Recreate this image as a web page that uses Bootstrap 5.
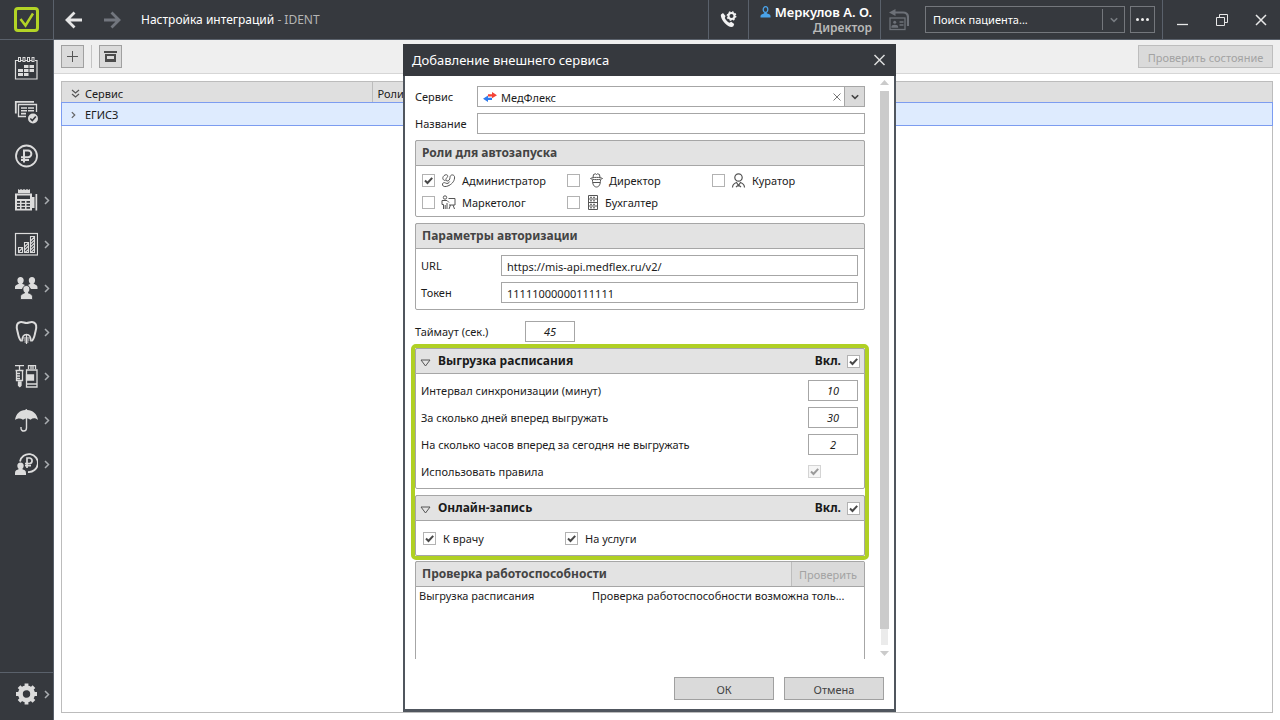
<!DOCTYPE html>
<html lang="ru">
<head>
<meta charset="utf-8">
<meta name="viewport" content="width=device-width, initial-scale=1">
<title>Настройка интеграций - IDENT</title>
<link href="https://cdn.jsdelivr.net/npm/bootstrap@5.3.0/dist/css/bootstrap.min.css" rel="stylesheet">
<style>
  :root { --dark: #36393e; --line: #5a616b; --edge: #a6a6a6; --fill: #e3e3e3; --btn: #dadada; }
  body { font-family: "Noto Sans", "Open Sans", sans-serif; font-size: 11px; line-height: 16px; color: #1c1c1c; background: #fff; }
  svg { display: block; flex: none; }
  button, a { color: inherit; }
  .bare { background: none; border: 0; padding: 0; display: flex; align-items: center; justify-content: center; }

  .sidebar { width: 54px; background: var(--dark); border-right: 1px solid var(--line); color: #dcdcdc; }
  .logo-cell { height: 40px; border-bottom: 1px solid var(--line); }
  .side-list { padding-top: 6px; }
  .side-link { height: 44px; padding-left: 14px; gap: 6px; display: flex; align-items: center; text-decoration: none; }
  .side-link svg + svg { color: #a9acb0; }
  .side-foot { border-top: 1px solid var(--line); height: 48px; }
  .side-foot .side-link { height: 42px; }

  .topbar { height: 40px; background: var(--dark); border-bottom: 1px solid var(--line); color: #fff; padding-left: 11px; }
  .topbar h1 { font-size: 12px; line-height: 18px; font-weight: 400; }
  .nav-arrow { margin-right: 20px; }
  .app-name { color: #b4b4b4; }
  .cell { border-left: 1px solid var(--line); align-self: stretch; display: flex; align-items: center; }
  .phone-cell { width: 40px; }
  .user-cell { width: 132px; padding-right: 8px; }
  .user-name { font-size: 13px; font-weight: 600; line-height: 16px; }
  .user-role { font-size: 12px; font-weight: 600; line-height: 15px; color: #b9b9b9; }
  .search { width: 200px; height: 27px; border: 1px solid #74777c; margin-right: 5px; }
  .search input { background: none; border: 0; color: #fff; width: 176px; padding: 0 7px; outline: 0; }
  .search input::placeholder { color: #fff; opacity: 1; }
  .search button { width: 22px; height: 21px; border-left: 1px solid #74777c; color: #777b80; }
  .dots { width: 25px; height: 27px; border: 1px solid #74777c; margin-right: 7px; }
  .win-cell { width: 118px; color: #e8e8e8; }
  .win-cell button { width: 39px; height: 39px; }

  .toolbar { height: 34px; padding: 5px 7px; gap: 7px; background: #efefef; border-bottom: 1px solid #d6d6d6; }
  .flat-btn { background: var(--btn); border: 1px solid #a0a0a0; border-radius: 0; color: #444; font-size: 11px; line-height: 16px; padding: 2px 0 0; height: 23px; display: flex; align-items: center; justify-content: center; }
  .flat-btn:disabled { color: #a3a3a3; border-color: #bdbdbd; background: #dadada; opacity: 1; }
  .sq { width: 23px; padding: 0; }
  .state-btn { min-width: 135px; }
  .sep { width: 1px; background: #c4c4c4; }

  .grid-panel { margin: 7px; border: 1px solid #bcbcbc; }
  .services { width: 100%; table-layout: fixed; }
  .services th { height: 21px; padding: 2px 5px 0; background: #dfdfdf; font-weight: 400; }
  .services th + th { border-left: 1px solid #bcbcbc; }
  .services td { height: 22px; padding: 1px 5px 0; background: #deebfe; }
  .services tbody tr { outline: 1px solid #7c9cf0; }
  .col-name { width: 310px; }
  .with-mark { display: flex; align-items: center; gap: 5px; }
  .with-mark svg { color: #666; }

  .dialog-win { position: absolute; left: 403px; top: 44px; bottom: 8px; width: 493px; background: #fff; border: 2px solid #50565e; border-top: 0; border-bottom-width: 3px; }
  .dialog-head { height: 32px; margin: 0 -2px; padding: 0 10px 0 9px; background: var(--dark); color: #fff; }
  .dialog-head h2 { font-size: 13px; line-height: 18px; font-weight: 400; }
  .dialog-head button { color: #ddd; }
  .dialog-body { min-height: 0; padding-right: 5px; }
  .form-area { min-width: 0; margin: 10px 15px 0 10px; clip-path: inset(0 -5px 0 -5px); }
  .dialog-foot { padding: 18px 10px 9px; gap: 10px; }
  .dialog-foot .flat-btn { width: 100px; }

  .line-row { display: flex; align-items: center; gap: 6px; height: 21px; margin-bottom: 6px; }
  .line-row.timeout { margin-top: 11px; }
  .box { height: 21px; border: 1px solid var(--edge); background: #fff; border-radius: 0; color: #1c1c1c; font-size: 11px; line-height: 16px; padding: 2px 5px 0; min-width: 0; outline: 0; }
  .num { width: 50px; text-align: center; font-style: italic; padding: 0; flex: none; }
  .picker { display: flex; align-items: center; padding: 0 0 0 5px; }
  .picker select { appearance: none; background: none; border: 0; outline: 0; padding: 2px 4px 0; color: #1c1c1c; min-width: 0; }
  .picker .drop { width: 20px; align-self: stretch; background: var(--btn); border-left: 1px solid var(--edge); color: #444; }
  .clear-btn { margin-right: 3px; }
  .lab-a { width: 56px; } .lab-b { width: 74px; } .lab-c { width: 104px; }

  .group { border: 1px solid var(--edge); border-radius: 2px; margin-bottom: 6px; }
  .group-head { height: 26px; margin: -1px; border: 1px solid var(--edge); border-radius: 2px 2px 0 0; background: var(--fill); padding: 0 4px 0 6px; display: flex; align-items: center; font-size: 12px; font-weight: 700; line-height: 18px; color: #444; }
  .group-head h3 { font: inherit; margin: 0; }
  .group-head label { margin: 0 6px 0 auto; }
  .group-head.strong { color: #1a1a1a; padding-left: 4px; }
  .fold-btn { padding-top: 4px; margin-right: 7px; }
  .group-body { padding: 7px 6px 0 5px; }
  .framed { outline: 4px solid #b0d024; border-radius: 1px; margin-bottom: 5px; }
  .framed .group:last-child { margin-bottom: 0; }

  .tick { appearance: none; width: 13px; height: 13px; border: 1px solid #b2b2b2; background: #fff center/11px 11px no-repeat; margin: 0; flex: none; }
  .tick:checked { background-image: url("data:image/svg+xml,%3Csvg xmlns='http://www.w3.org/2000/svg' viewBox='0 0 11 11'%3E%3Cpath d='M2 5.5l2.5 2.5L9.2 2.8' fill='none' stroke='%23484848' stroke-width='2'/%3E%3C/svg%3E"); }
  .tick:disabled { opacity: .55; background-color: #eee; }
  .roles { display: grid; grid-template-columns: 145px 145px 1fr; padding: 4px 6px 3px; }
  .roles label { height: 22px; display: flex; align-items: center; gap: 6px; }
  .roles label span { padding-top: 2px; }
  .roles svg { color: #555; }
  .booking { grid-template-columns: 142px 1fr; padding: 7px 7px 6px; }
  .booking label { gap: 7px; }

  .check-btn { width: 73px; height: 24px; border-width: 0 0 0 1px; margin-right: -4px; }
  .result { height: 90px; padding: 2px 9px 0 3px; }
  .result .what { width: 173px; flex: none; }

  .scroll { width: 9px; padding: 4px 0 3px; }
  .scroll .thumb { flex: 1; background: #cbcbcb; margin-top: 6px; }
  .scroll .rest { height: 16px; background: #ebebeb; margin: 0 1px 6px; }
</style>
</head>
<body>
<svg width="0" height="0" class="position-absolute" aria-hidden="true">
  <symbol id="chev" viewBox="0 0 6 8"><path d="M1 .5L4.500 4 1 7.500" fill="none" stroke="currentColor" stroke-width="1.500"/></symbol>
  <symbol id="down" viewBox="0 0 8 6"><path d="M.8 1.200L4 4.400 7.200 1.200" fill="none" stroke="currentColor" stroke-width="1.600"/></symbol>
  <symbol id="cross" viewBox="0 0 12 12"><path d="M1 1l10 10M11 1L1 11" fill="none" stroke="currentColor" stroke-width="1.500"/></symbol>
  <symbol id="fold" viewBox="0 0 11 8"><path d="M1 1h9L5.500 7z" fill="none" stroke="#555"/></symbol>
</svg>

<div class="d-flex vh-100 position-relative overflow-hidden">
  <nav class="sidebar d-flex flex-column flex-shrink-0" aria-label="Разделы">
    <div class="logo-cell d-flex align-items-center justify-content-center">
      <svg width="25" height="25" viewBox="0 0 25 25" fill="none" stroke="#b3d426"><rect x="1.500" y="1.500" width="22" height="22" rx="2.500" stroke-width="3"/><path d="M6.500 12l5 6.500L19 6.500" stroke-width="2.500"/></svg>
    </div>
    <div class="side-list flex-grow-1">
      <a class="side-link" href="#" aria-label="Расписание"><svg width="24" height="24" viewBox="0 0 24 24"><path d="M4 4.500H1.500v18.500h21.500V4.500H21" fill="none" stroke="currentColor" stroke-width="1.200"/><g fill="none" stroke="currentColor"><rect x="4.500" y="1.500" width="2" height="4"/><rect x="9" y="1.500" width="2" height="4"/><rect x="13.500" y="1.500" width="2" height="4"/><rect x="18" y="1.500" width="2" height="4"/><path d="M6.500 4.500H9M11 4.500h2.500M15.500 4.500H18"/></g><path fill="currentColor" d="M10 9h4.500v3H10zM15.500 9H20v3h-4.500zM4 13h5v3H4zM10 13h4.500v3H10zM15.500 13H20v3h-4.500zM4 17h5v3H4zM10 17h4.500v3H10z"/></svg></a>
      <a class="side-link" href="#" aria-label="Задачи"><svg width="24" height="24" viewBox="0 0 24 24"><path d="M1.800 13.500V1.800H20" fill="none" stroke="currentColor" stroke-width="1.800"/><path d="M12 16.500H4.500v-12h18V12" fill="none" stroke="currentColor" stroke-width="1.300"/><path d="M7 8h6M14 8h6M7 10.800h6M14 10.800h6M7 13.600h5" stroke="currentColor" stroke-width="1.600"/><circle cx="19" cy="18.500" r="5" fill="currentColor"/><path d="M16.300 18.500l2 2 3.500-4" fill="none" stroke="#36393e" stroke-width="1.600"/></svg></a>
      <a class="side-link" href="#" aria-label="Финансы"><svg width="24" height="24" viewBox="0 0 24 24" fill="none" stroke="currentColor"><circle cx="12.500" cy="12" r="10.500" stroke-width="1.800"/><path d="M10 18.500v-12h4a3.300 3.300 0 0 1 0 6.700H7M7 16h8" stroke-width="2"/></svg></a>
      <a class="side-link" href="#" aria-label="Касса"><svg width="24" height="24" viewBox="0 0 24 24"><path fill="currentColor" d="M4 5V1l1.500 1L7 1l1.500 1L10 1l1.500 1L13 1l1.500 1L16 1v4z"/><path fill="currentColor" fill-rule="evenodd" d="M1 5.500h17v17H1zM3 7.500V11h13V7.500zM3 13v1.800h3V13zM7.500 13v1.800h3.500V13zM12.500 13v1.800H16V13zM3 16v1.800h3V16zM7.500 16v1.800h3.500V16zM12.500 16v1.800H16V16zM3 19v1.800h3V19zM7.500 19v1.800h3.500V19zM12.500 19v1.800H16V19z"/><path fill="currentColor" d="M18 9h2.500v11H18zM21.500 6h1.700v16.500h-1.700z"/></svg><svg width="6" height="9"><use href="#chev"/></svg></a>
      <a class="side-link" href="#" aria-label="Отчёты"><svg width="24" height="24" viewBox="0 0 24 24" fill="none" stroke="currentColor"><rect x="1.500" y="1.500" width="22" height="21.500" stroke-width="1.200"/><path stroke-width="1.100" d="M4.500 15.500h4v5h-4zM10.500 10.500h4v10h-4zM16.500 4.500h4v16h-4zM4.500 20l4-4M10.500 15l4-4M10.500 18l4-4M11 20.500l3.500-3M16.500 9l4-4M16.500 12l4-4M16.500 15l4-4M16.500 18l4-4M17 20.500l3.500-3.500"/></svg><svg width="6" height="9"><use href="#chev"/></svg></a>
      <a class="side-link" href="#" aria-label="Пациенты"><svg width="24" height="24" viewBox="0 0 24 24" fill="currentColor"><path d="M6.500 1C4.500 1 3.300 2.400 3.400 4.300c.1 1.700.8 2.800 1.700 3.500C3.200 8.700 1 9 1 11.500V13h7l3-4L8 7.800c.9-.7 1.600-1.800 1.700-3.500C9.800 2.400 8.500 1 6.500 1z"/><path d="M18 1c2 0 3.200 1.400 3.100 3.300-.1 1.700-.8 2.800-1.700 3.500 1.900.9 4.100 1.200 4.100 3.700V13H17l-3-4 2.500-1.200c-.9-.7-1.600-1.800-1.700-3.500C14.700 2.400 16 1 18 1z"/><path d="M12.300 9.500c2.300 0 3.600 1.600 3.500 3.600-.1 1.800-.8 2.900-1.800 3.700 2 1 4.500 1.500 4.500 4V23.500H6.500v-2.700c0-2.500 2.200-3 4.200-4-1-.8-1.700-1.900-1.800-3.700-.1-2 1.200-3.600 3.400-3.600z" stroke="#36393e" stroke-width=".8"/></svg><svg width="6" height="9"><use href="#chev"/></svg></a>
      <a class="side-link" href="#" aria-label="Лечение"><svg width="24" height="24" viewBox="0 0 24 24" fill="none" stroke="currentColor" stroke-width="2"><path d="M7.500 21C4.500 19 4.500 15 3.500 11.500 2 7 2.500 3 6 2.200c3-.5 4 .8 6.500.8s3.500-1.300 6.500-.8c3.500.8 4 5 2.500 9.300-1 3.500-1 7.500-4 9.500"/><path d="M8 21.500C8 17 9.500 14.500 12.500 14.500S17 17 17 21.500" stroke-width="1.600"/><path d="M12.500 15v9M9 18h7M9.500 20h6M10.500 22h4" stroke-width="1.200"/></svg><svg width="6" height="9"><use href="#chev"/></svg></a>
      <a class="side-link" href="#" aria-label="Склад"><svg width="24" height="24" viewBox="0 0 24 24" fill="none" stroke="currentColor" stroke-width="1.300"><path d="M1 1.700h9M5.500 1.500V6M1.500 6.500h8M2.500 6.500v10h6v-10M3 9.500h3M3 12h3M3 14.500h3"/><path d="M4.500 18h2.500v3.500l-1.200 1.200-1.300-1.200z" fill="currentColor"/><path d="M14.500 5V1.700h7V5M17 2v3M19 2v3M12.500 6h10.500v17H12.500zM12.500 20h10"/><path d="M12.500 11h7v5h-7z" fill="currentColor"/></svg><svg width="6" height="9"><use href="#chev"/></svg></a>
      <a class="side-link" href="#" aria-label="Страхование"><svg width="24" height="24" viewBox="0 0 24 24"><path d="M1 12C2 5.500 6 2.200 11.300 2c.3-1.500 1.700-1.500 2 0C18.500 2.200 23 5.500 24 12c-2.500-2.300-5-2.300-7.500-.3-2.500-2-5-2-7.500 0-2.500-1.700-5.500-1.700-8 .3z" fill="currentColor"/><path d="M12.500 10v10c0 4-5.500 4-5.500.3V19" fill="none" stroke="currentColor" stroke-width="1.400"/></svg><svg width="6" height="9"><use href="#chev"/></svg></a>
      <a class="side-link" href="#" aria-label="Зарплата"><svg width="24" height="24" viewBox="0 0 24 24"><path d="M6 9.500A9 9 0 1 1 14 20" fill="none" stroke="currentColor" stroke-width="1.800"/><path d="M13 16V6h2.800a2.800 2.800 0 0 1 0 5.500H11M11 13.700h6" fill="none" stroke="currentColor" stroke-width="1.700"/><path d="M6.500 10.500c2 0 3.300 1.400 3.200 3.300-.1 1.600-.7 2.600-1.600 3.300 1.900.9 3.900 1.400 3.900 3.900v2H1v-2c0-2.500 2-3 3.900-3.900-.9-.7-1.500-1.700-1.600-3.300-.1-1.900 1.200-3.300 3.200-3.300z" fill="currentColor"/></svg><svg width="6" height="9"><use href="#chev"/></svg></a>
    </div>
    <div class="side-foot">
      <a class="side-link" href="#" aria-label="Настройки"><svg width="24" height="24" viewBox="0 0 24 24"><g transform="translate(12.500 12)" fill="currentColor"><circle r="6" fill="none" stroke="currentColor" stroke-width="5"/><path d="M-1.900-10.500h3.800v21h-3.800z M-10.500-1.900v3.800h21v-3.800z M-8.800-6.100l2.700-2.700L8.800 6.100 6.100 8.800z M8.800-6.100L6.100-8.800-8.800 6.100l2.700 2.700z"/><circle r="3.700" fill="#36393e"/></g></svg><svg width="6" height="9"><use href="#chev"/></svg></a>
    </div>
  </nav>

  <div class="flex-grow-1 d-flex flex-column">
    <header class="topbar d-flex align-items-center flex-shrink-0">
      <button class="bare nav-arrow" aria-label="Назад"><svg width="18" height="18" viewBox="0 0 18 18" fill="none" stroke="#e6e6e6" stroke-width="2.800"><path d="M17 9H2.500M9.500 1.500L2 9l7.500 7.500"/></svg></button>
      <button class="bare nav-arrow" aria-label="Вперёд" disabled><svg width="18" height="18" viewBox="0 0 18 18" fill="none" stroke="#72767e" stroke-width="2.800"><path d="M1 9h14.500M8.500 1.500L16 9l-7.500 7.500"/></svg></button>
      <h1 class="mb-0 me-auto">Настройка интеграций <span class="app-name">- IDENT</span></h1>
      <div class="cell phone-cell justify-content-center">
        <button class="bare" aria-label="Настройки телефонии"><svg width="17" height="17" viewBox="0 0 17 17"><path d="M1 3.500l2-1.500 2.500 3L4.800 7c1 2 2.500 3.800 4.700 4.800l1.700-1 3 2.300-.8 2.200c-2 1.500-5.500.2-8.500-3S.3 5 1 3.500z" fill="#f2f2f2"/><circle cx="11.500" cy="5" r="3" fill="none" stroke="#f2f2f2" stroke-width="2"/><circle cx="11.500" cy="5" r="4.200" fill="none" stroke="#f2f2f2" stroke-width="1.400" stroke-dasharray="1.650 1.650"/></svg></button>
      </div>
      <div class="cell user-cell flex-column align-items-end justify-content-center">
        <div class="user-name d-flex align-items-center gap-1"><svg width="11" height="12" viewBox="0 0 11 12"><path d="M.5 11.500V10c0-1.500 2-2 4-2.700h2c2 .7 4 1.200 4 2.700v1.500z" fill="#4aa3ea"/><path d="M4.200 6.500v2h2.600v-2" fill="#4aa3ea"/><ellipse cx="5.500" cy="3.600" rx="2.300" ry="2.900" fill="#36393e" stroke="#4aa3ea" stroke-width="1.300"/></svg>Меркулов А. О.</div>
        <div class="user-role">Директор</div>
      </div>
      <div class="cell ps-2 pe-3">
        <button class="bare" aria-label="Карта пациента" disabled><svg width="20" height="22" viewBox="0 0 20 22" fill="none" stroke="#6d7178" stroke-width="1.300"><path d="M5 3.500h9c3.500 0 5 2 5 5V17" stroke-width="2.200"/><path d="M0 3.500L6.500 0v7z" fill="#6d7178" stroke="none"/><rect x="1" y="9" width="15" height="11.500"/><path d="M10.500 13h4M10.500 16h4"/><path d="M3 18c0-2 5.500-2 5.500 0z" fill="#6d7178"/><circle cx="5.700" cy="13.200" r="1.500" fill="#6d7178" stroke="none"/></svg></button>
      </div>
      <div class="search d-flex align-items-center"><input type="text" placeholder="Поиск пациента..." aria-label="Поиск пациента"><button class="bare border-top-0 border-bottom-0" aria-label="Раскрыть список"><svg width="8" height="6"><use href="#down"/></svg></button></div>
      <button class="bare dots" aria-label="Ещё"><svg width="13" height="3" viewBox="0 0 13 3" fill="#eee"><circle cx="1.500" cy="1.500" r="1.500"/><circle cx="6.500" cy="1.500" r="1.500"/><circle cx="11.500" cy="1.500" r="1.500"/></svg></button>
      <div class="cell win-cell">
        <button class="bare" aria-label="Свернуть"><svg width="11" height="12" viewBox="0 0 11 12"><path d="M0 10.500h11" stroke="currentColor" stroke-width="1.300"/></svg></button>
        <button class="bare" aria-label="Восстановить"><svg width="12" height="12" viewBox="0 0 12 12" fill="none" stroke="currentColor"><path d="M.5 3.500h8v8h-8zM3.500 3.500v-3h8v8h-3"/></svg></button>
        <button class="bare" aria-label="Закрыть"><svg width="12" height="12"><use href="#cross"/></svg></button>
      </div>
    </header>

    <div class="toolbar d-flex flex-shrink-0">
      <button class="flat-btn sq" aria-label="Добавить"><svg width="11" height="11" viewBox="0 0 11 11"><path d="M5.500 0v11M0 5.500h11" stroke="#555" stroke-width="1"/></svg></button>
      <div class="sep"></div>
      <button class="flat-btn sq" aria-label="Архив"><svg width="13" height="11" viewBox="0 0 13 11"><path fill="#4c4c4c" fill-rule="evenodd" d="M0 0h13v2H0zM1 3h11v8H1zM3 5v3h7V5z"/></svg></button>
      <button class="flat-btn state-btn ms-auto px-2" disabled>Проверить состояние</button>
    </div>

    <main class="grid-panel flex-grow-1">
      <table class="services">
        <colgroup><col class="col-name"><col></colgroup>
        <thead><tr><th scope="col"><span class="with-mark"><svg class="ms-1" width="9" height="9" viewBox="0 0 9 9" fill="none" stroke="#555" stroke-width="1.200"><path d="M1 1l3.500 3L8 1M1 5l3.500 3L8 5"/></svg>Сервис</span></th><th scope="col">Роли</th></tr></thead>
        <tbody><tr><td><span class="with-mark"><svg class="ms-1 me-1" width="5" height="8"><use href="#chev"/></svg>ЕГИСЗ</span></td><td></td></tr></tbody>
      </table>
    </main>
  </div>

  <section class="dialog-win d-flex flex-column" role="dialog" aria-labelledby="dlg-title">
    <div class="dialog-head d-flex align-items-center justify-content-between flex-shrink-0">
      <h2 class="m-0" id="dlg-title">Добавление внешнего сервиса</h2>
      <button class="bare" aria-label="Закрыть окно"><svg width="13" height="12"><use href="#cross"/></svg></button>
    </div>
    <div class="dialog-body d-flex flex-grow-1">
      <form class="form-area flex-grow-1" id="svc">
        <div class="line-row"><label class="lab-a" for="service">Сервис</label>
          <div class="box picker flex-grow-1">
            <svg width="14" height="10" viewBox="0 0 14 10"><path d="M5 2.200h4V0l5 3.200-5 3V4.500H5z" fill="#f44336"/><path d="M9 5.800H5V3.500L0 6.700 5 10V8h4z" fill="#2f7ced"/></svg>
            <select id="service" class="flex-grow-1"><option>МедФлекс</option></select>
            <button type="button" class="bare clear-btn" aria-label="Очистить"><svg width="8" height="8" viewBox="0 0 8 8"><path d="M.5.5l7 7M7.500.5l-7 7" stroke="#777"/></svg></button>
            <button type="button" class="bare drop" aria-label="Раскрыть"><svg width="8" height="6"><use href="#down"/></svg></button>
          </div></div>
        <div class="line-row"><label class="lab-a" for="title">Название</label><input class="box flex-grow-1" id="title" type="text"></div>

        <div class="group">
          <div class="group-head"><h3>Роли для автозапуска</h3></div>
          <div class="roles">
            <label><input class="tick" type="checkbox" checked><svg width="15" height="15" viewBox="0 0 15 15" fill="none" stroke="currentColor"><path d="M4.500 7.500C1 7.500 1 3.500 4 2c2.500-1 3.500 1 2 2.500s-1.500 3 0 3.500 3-1.500 3-3.500c0-3 3.500-3.500 4.500-1 .5 4-2 7-5.500 9-3 1.500-6 1.500-6.500-.5s1.500-3 3-2c2 1.200 3.500 0 4.200-1.500"/></svg><span>Администратор</span></label>
            <label><input class="tick" type="checkbox"><svg class="ms-1" width="13" height="15" viewBox="1 0 13 15" fill="none" stroke="currentColor"><path d="M4 4.500L4.500 1.500l2-.7 1 .7 1-.7 2 .7.5 3M1.500 5.500c2-1.500 10-1.500 12 0-1.500 1.500-10.500 1.500-12 0zM3.500 7c0 4.500 1.500 7 4 7s4-2.500 4-7M4 9.500h7"/></svg><span>Директор</span></label>
            <label><input class="tick" type="checkbox"><svg width="15" height="15" viewBox="0 0 15 15" fill="none" stroke="currentColor" stroke-width="1.200"><circle cx="7.500" cy="4.500" r="3.700"/><path d="M1.500 14.500c0-3 1-4 4-5l2 3 2-3c3 1 4 2 4 5M5 14l2.500-2L10 14"/></svg><span>Куратор</span></label>
            <label><input class="tick" type="checkbox"><svg width="15" height="15" viewBox="0 0 15 15" fill="none" stroke="currentColor"><circle cx="4" cy="2.500" r="1.700"/><path d="M2.500 14V9.500H1V5.500h5l2 2M6 14V8M4.200 10v4M7.500 3.500h6.500v6.500H8M9.500 10l-1.500 4M12 10l1.500 4"/></svg><span>Маркетолог</span></label>
            <label><input class="tick" type="checkbox"><svg width="13" height="15" viewBox="0 0 13 15" fill="none" stroke="currentColor"><path d="M2.500.5h9v14h-9zM2.500 4h9M2.500 7.500h9M2.500 11h9"/><path d="M4 2.300h6M4 5.800h6M4 9.300h6M4 12.800h6" stroke-dasharray="2 1"/></svg><span>Бухгалтер</span></label>
          </div>
        </div>

        <div class="group">
          <div class="group-head"><h3>Параметры авторизации</h3></div>
          <div class="group-body">
            <div class="line-row"><label class="lab-b" for="url">URL</label><input class="box flex-grow-1" id="url" type="text" value="https://mis-api.medflex.ru/v2/"></div>
            <div class="line-row"><label class="lab-b" for="token">Токен</label><input class="box flex-grow-1" id="token" type="text" value="11111000000111111"></div>
          </div>
        </div>

        <div class="line-row timeout"><label class="lab-c" for="timeout">Таймаут (сек.)</label><input class="box num" id="timeout" type="text" value="45"></div>

        <div class="framed">
          <div class="group">
            <div class="group-head strong"><button type="button" class="bare fold-btn" aria-label="Свернуть раздел"><svg width="11" height="8"><use href="#fold"/></svg></button><h3>Выгрузка расписания</h3><label for="on1">Вкл.</label><input class="tick" id="on1" type="checkbox" checked></div>
            <div class="group-body">
              <div class="line-row justify-content-between"><label for="interval">Интервал синхронизации (минут)</label><input class="box num" id="interval" type="text" value="10"></div>
              <div class="line-row justify-content-between"><label for="days">За сколько дней вперед выгружать</label><input class="box num" id="days" type="text" value="30"></div>
              <div class="line-row justify-content-between"><label for="hours">На сколько часов вперед за сегодня не выгружать</label><input class="box num" id="hours" type="text" value="2"></div>
              <div class="line-row justify-content-between"><label for="rules">Использовать правила</label><span class="num"><input class="tick d-block" id="rules" type="checkbox" checked disabled></span></div>
            </div>
          </div>
          <div class="group">
            <div class="group-head strong"><button type="button" class="bare fold-btn" aria-label="Свернуть раздел"><svg width="11" height="8"><use href="#fold"/></svg></button><h3>Онлайн-запись</h3><label for="on2">Вкл.</label><input class="tick" id="on2" type="checkbox" checked></div>
            <div class="roles booking">
              <label><input class="tick" type="checkbox" checked><span>К врачу</span></label>
              <label><input class="tick" type="checkbox" checked><span>На услуги</span></label>
            </div>
          </div>
        </div>

        <div class="group mb-0">
          <div class="group-head"><h3>Проверка работоспособности</h3><button type="button" class="flat-btn check-btn ms-auto" disabled>Проверить</button></div>
          <div class="result d-flex"><div class="what">Выгрузка расписания</div><div>Проверка работоспособности возможна толь...</div></div>
        </div>
      </form>
      <div class="scroll d-flex flex-column" aria-hidden="true">
        <svg width="9" height="5" viewBox="0 0 9 5"><path d="M4.500 0L9 5H0z" fill="#cbcbcb"/></svg>
        <div class="thumb"></div><div class="rest"></div>
        <svg width="9" height="5" viewBox="0 0 9 5"><path d="M4.500 5L9 0H0z" fill="#cbcbcb"/></svg>
      </div>
    </div>
    <div class="dialog-foot d-flex justify-content-end flex-shrink-0">
      <button class="flat-btn" form="svc">ОК</button>
      <button class="flat-btn">Отмена</button>
    </div>
  </section>
</div>
<script src="https://cdn.jsdelivr.net/npm/bootstrap@5.3.0/dist/js/bootstrap.bundle.min.js"></script>
</body>
</html>
